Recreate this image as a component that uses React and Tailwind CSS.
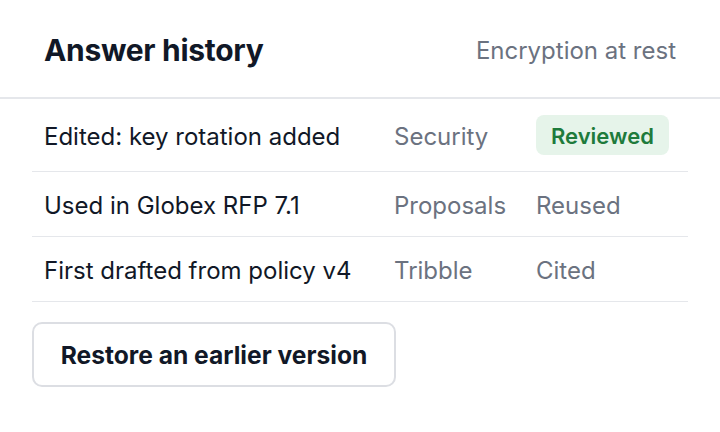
export default function App() {
  const rows = [
    { t: "Edited: key rotation added", s: "Security", st: "Reviewed", badge: true },
    { t: "Used in Globex RFP 7.1", s: "Proposals", st: "Reused" },
    { t: "First drafted from policy v4", s: "Tribble", st: "Cited" },
  ];
  return (
    <div className="w-[720px] h-[432px] bg-white font-['Inter',sans-serif] text-[#111827] overflow-hidden">
      <div className="h-[99px] flex items-center justify-between px-[44px] border-b-2 border-[#e5e7eb]">
        <h1 className="text-[30px] font-bold tracking-[-0.3px] pt-[4px]">Answer history</h1>
        <span className="text-[24px] text-[#6b7280] pt-[4px]">Encryption at rest</span>
      </div>
      <div className="px-8">
        {rows.map((r, i) => (
          <div
            key={i}
            className="grid grid-cols-[350px_142px_1fr] items-center px-3 py-4 border-b border-[#e5e7eb] text-[24px]"
          >
            <span className="block leading-[28px] pt-1">{r.t}</span>
            <span className="block leading-[28px] pt-1 text-[#6b7280]">{r.s}</span>
            <div>
              {r.badge ? (
                <span className="inline-flex items-center h-[40px] pt-[2px] px-[15px] rounded-lg bg-[#e6f4ea] text-[#1e7b3c] font-semibold text-[22px]">
                  {r.st}
                </span>
              ) : (
                <span className="block leading-[28px] pt-1 text-[#6b7280]">{r.st}</span>
              )}
            </div>
          </div>
        ))}
        <button className="mt-5 h-[65px] w-[364px] pt-[2px] rounded-[10px] border-2 border-[#dcdee3] bg-white text-[24.6px] font-bold text-[#111827]">
          Restore an earlier version
        </button>
      </div>
    </div>
  );
}
